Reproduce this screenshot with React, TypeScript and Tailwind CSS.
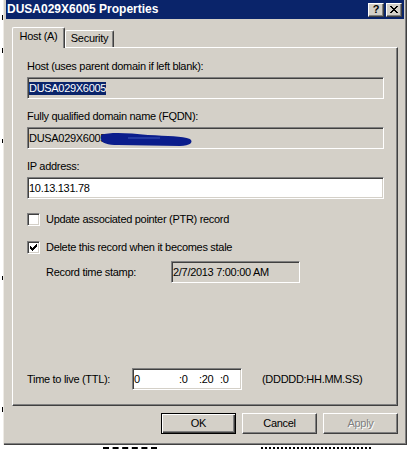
import { clsx } from 'clsx'

const sunken =
  'border border-t-[#808080] border-l-[#808080] border-b-white border-r-white shadow-[inset_1px_1px_0_#404040,inset_-1px_-1px_0_#d4d0c8]'
const raised =
  'border border-t-white border-l-white border-r-[#404040] border-b-[#404040] shadow-[inset_-1px_-1px_0_#808080]'

function Edit({ className, children }: { className?: string; children?: React.ReactNode }) {
  return <div className={clsx('relative flex h-[22px] items-center pl-[1px]', sunken, className)}>{children}</div>
}

function Pixels({ rows, w, h }: { rows: string[]; w: number; h: number }) {
  return (
    <svg width={w} height={h} viewBox={`0 0 ${w} ${h}`} shapeRendering="crispEdges">
      {rows.flatMap((row, y) =>
        row.split('').map((c, x) => (c === 'X' ? <rect key={`${x}-${y}`} x={x} y={y} width={1} height={1} fill="#000" /> : null))
      )}
    </svg>
  )
}

const CHECK = ['......X', '.....XX', 'X...XXX', 'XX.XXX.', 'XXXXX..', '.XXX...', '..X....']
const CLOSE = ['XX....XX', '.XX..XX.', '..XXXX..', '...XX...', '..XXXX..', '.XX..XX.', 'XX....XX']

function Checkbox({ checked, label }: { checked?: boolean; label: string }) {
  return (
    <div className="flex h-[13px] items-center gap-[6px]">
      <div className={clsx('flex h-[13px] w-[13px] items-center justify-center bg-white', sunken)}>
        {checked && <Pixels rows={CHECK} w={7} h={7} />}
      </div>
      <span>{label}</span>
    </div>
  )
}

function Button({ label, kind }: { label: string; kind?: 'default' | 'disabled' }) {
  if (kind === 'default') {
    return (
      <div className="flex h-[21px] w-[75px] items-center justify-center border border-black shadow-[inset_1px_1px_0_#fff,inset_-1px_-1px_0_#404040,inset_-2px_-2px_0_#808080]">
        {label}
      </div>
    )
  }
  return (
    <div
      className={clsx(
        'flex h-[21px] w-[75px] items-center justify-center',
        raised,
        kind === 'disabled' && 'text-[#808080] [text-shadow:1px_1px_0_#fff]'
      )}
    >
      {label}
    </div>
  )
}

export default function App() {
  return (
    <div className="flex h-[450px] w-[416px] overflow-hidden bg-white font-['Liberation_Sans',Arial,sans-serif] text-[11px] leading-[13px] tracking-[-0.3px] text-black">
      {/* bits of the window behind */}
      <div className="flex w-[3px] flex-col">
        <div className="ml-[2px] mt-[15px] h-[5px] w-px bg-black" />
        <div className="ml-[2px] mt-[28px] h-[5px] w-px bg-black" />
        <div className="ml-[2px] mt-[86px] h-[4px] w-px bg-black" />
        <div className="ml-[2px] mt-[133px] h-[4px] w-px bg-black" />
        <div className="ml-[2px] mt-[127px] h-[5px] w-px bg-black" />
      </div>

      <div className="flex w-[404px] flex-col">
        <div className="flex h-[445px] flex-col bg-[#d4d0c8] pl-[3px] pr-[3px] shadow-[inset_1px_0_0_#eeebe6,inset_-1px_-1px_0_#404040,inset_-2px_-2px_0_#808080]">
          {/* Title bar */}
          <div className="flex h-[19px] items-center justify-between bg-[#0a246a] pl-[1px] pr-[2px]">
            <span className="text-[12px] font-bold tracking-normal text-white">DUSA029X6005 Properties</span>
            <div className="flex gap-[2px]">
              <div className={clsx('flex h-[14px] w-[16px] items-center justify-center bg-[#d4d0c8] text-[11px] font-bold leading-none tracking-normal', raised)}>
                ?
              </div>
              <div className={clsx('flex h-[14px] w-[16px] items-center justify-center bg-[#d4d0c8]', raised)}>
                <Pixels rows={CLOSE} w={8} h={7} />
              </div>
            </div>
          </div>

          {/* Tabs */}
          <div className="ml-[6px] mt-[8px] flex h-[20px] items-end">
            <div className="relative z-10 -mb-px flex h-[21px] w-[53px] justify-center rounded-t-[2px] border-l border-t border-r border-l-white border-t-white border-r-[#404040] bg-[#d4d0c8] pt-[2px] shadow-[inset_-1px_0_0_#808080]">
              Host (A)
            </div>
            <div className="flex h-[17px] w-[49px] justify-center rounded-t-[2px] border-l border-t border-r border-l-white border-t-white border-r-[#404040] pt-[1px] shadow-[inset_-1px_0_0_#808080]">
              Security
            </div>
          </div>

          {/* Tab page */}
          <div className="ml-[6px] flex h-[359px] w-[386px] flex-col border border-t-white border-l-white border-r-[#404040] border-b-[#404040] pl-[14px] pt-[12px] shadow-[inset_-1px_-1px_0_#808080]">
            <div>Host (uses parent domain if left blank):</div>
            <Edit className="mt-[4px] w-[357px] bg-[#d4d0c8]">
              <span className="bg-[#0a246a] text-white">DUSA029X6005</span>
            </Edit>

            <div className="mt-[11px]">Fully qualified domain name (FQDN):</div>
            <Edit className="mt-[4px] w-[357px] bg-[#d4d0c8]">
              <span>DUSA029X6005</span>
              <svg className="absolute left-[70px] top-[2px]" width="100" height="18" viewBox="0 0 100 18">
                <path
                  d="M3 5 C12 2 30 3 50 5 C70 6 84 6 92 9 C96 12 92 16 82 16 C62 16 40 15 20 15 C10 15 3 13 3 9 Z"
                  fill="#0b1d8c"
                />
                <path d="M30 8 L62 8" stroke="#3d56b8" strokeWidth="1" />
              </svg>
            </Edit>

            <div className="mt-[11px]">IP address:</div>
            <Edit className="mt-[4px] w-[357px] bg-white">10.13.131.78</Edit>

            <div className="mt-[14px]">
              <Checkbox label="Update associated pointer (PTR) record" />
            </div>
            <div className="mt-[15px]">
              <Checkbox checked label="Delete this record when it becomes stale" />
            </div>

            <div className="ml-[19px] mt-[7px] flex items-center">
              <span className="w-[125px]">Record time stamp:</span>
              <Edit className="w-[129px] bg-[#d4d0c8]">2/7/2013 7:00:00 AM</Edit>
            </div>

            <div className="mt-[85px] flex items-center">
              <span className="w-[105px]">Time to live (TTL):</span>
              <Edit className="w-[110px] bg-white">
                <span className="w-[45px]">0</span>
                <span className="w-[20px]">:0</span>
                <span className="w-[21px]">:20</span>
                <span>:0</span>
              </Edit>
              <span className="ml-[20px]">(DDDDD:HH.MM.SS)</span>
            </div>
          </div>

          {/* Buttons */}
          <div className="ml-[6px] mt-[7px] flex w-[386px] justify-end gap-[6px]">
            <Button label="OK" kind="default" />
            <Button label="Cancel" />
            <Button label="Apply" kind="disabled" />
          </div>
        </div>

        {/* tops of the list text behind the dialog */}
        <div className="flex h-[5px] items-start pt-[2px]">
          <div className="ml-[100px] h-[2px] w-[54px] border-t-2 border-dashed border-black" />
          <div className="ml-[104px] h-[2px] w-[110px] border-t-2 border-dotted border-black" />
        </div>
      </div>
    </div>
  )
}
